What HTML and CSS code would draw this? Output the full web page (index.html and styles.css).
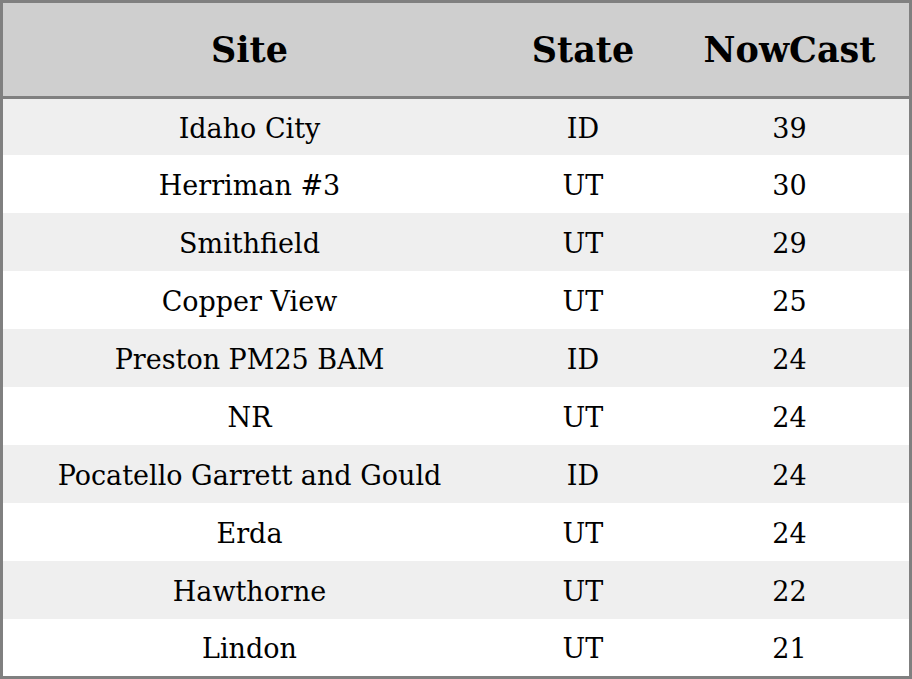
FILE: index.html
```html
<!DOCTYPE html>
<html>
<head>
<meta charset="utf-8">
<link rel="stylesheet" href="styles.css">
</head>
<body>
<table class="aq">
  <colgroup>
    <col class="c-site">
    <col class="c-state">
    <col class="c-now">
  </colgroup>
  <thead>
    <tr class="head"><th>Site</th><th>State</th><th>NowCast</th></tr>
  </thead>
  <tbody>
    <tr class="r first"><td>Idaho City</td><td>ID</td><td>39</td></tr>
    <tr class="r"><td>Herriman #3</td><td>UT</td><td>30</td></tr>
    <tr class="r"><td>Smithfield</td><td>UT</td><td>29</td></tr>
    <tr class="r"><td>Copper View</td><td>UT</td><td>25</td></tr>
    <tr class="r"><td>Preston PM25 BAM</td><td>ID</td><td>24</td></tr>
    <tr class="r"><td>NR</td><td>UT</td><td>24</td></tr>
    <tr class="r"><td>Pocatello Garrett and Gould</td><td>ID</td><td>24</td></tr>
    <tr class="r"><td>Erda</td><td>UT</td><td>24</td></tr>
    <tr class="r"><td>Hawthorne</td><td>UT</td><td>22</td></tr>
    <tr class="r last"><td>Lindon</td><td>UT</td><td>21</td></tr>
  </tbody>
</table>
</body>
</html>
```

FILE: styles.css
```css
html, body {
  margin: 0;
  padding: 0;
  background: #ffffff;
}

.aq {
  width: 912px;
  table-layout: fixed;
  border-collapse: separate;
  border-spacing: 0;
  border: 3px solid #808080;
  font-family: "DejaVu Serif", serif;
  color: #000;
}

.c-site { width: 493px; }
.c-state { width: 174px; }
.c-now { width: 239px; }

.aq th,
.aq td {
  padding: 0;
  text-align: center;
  vertical-align: middle;
  line-height: 1.2;
}

.head th {
  height: 93px;
  background: #cfcfcf;
  border-bottom: 3px solid #808080;
  font-size: 35px;
  font-weight: bold;
}

.r td {
  height: 54px;
  padding-top: 4px;
  font-size: 27px;
}

.r.first td { height: 52px; }
.r.last td { height: 53px; }

.r:nth-child(odd) td { background: #efefef; }
.r:nth-child(even) td { background: #ffffff; }
```
